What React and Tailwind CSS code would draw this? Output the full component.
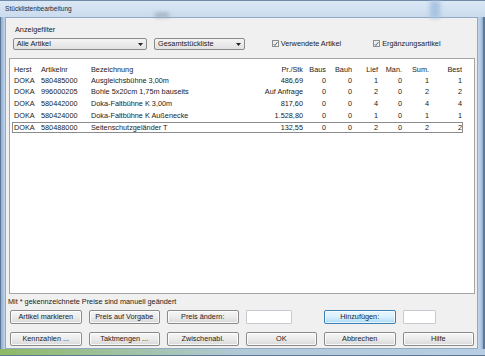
import React from "react";

const rows = [
  ["DOKA", "580485000", "Ausgleichsbühne 3,00m", "486,69", "0", "0", "1", "0", "1", "1"],
  ["DOKA", "996000205", "Bohle 5x20cm 1,75m bauseits", "Auf Anfrage", "0", "0", "2", "0", "2", "2"],
  ["DOKA", "580442000", "Doka-Faltbühne K 3,00m", "817,60", "0", "0", "4", "0", "4", "4"],
  ["DOKA", "580424000", "Doka-Faltbühne K Außenecke", "1.528,80", "0", "0", "1", "0", "1", "1"],
  ["DOKA", "580488000", "Seitenschutzgeländer T", "132,55", "0", "0", "2", "0", "2", "2"],
];

const header = ["Herst", "Artikelnr", "Bezeichnung", "Pr./Stk", "Baus", "Bauh", "Lief", "Man.", "Sum.", "Best"];

function Cells({ cells }) {
  return cells.map((c, i) => (
    <div
      key={i}
      className={
        "whitespace-nowrap overflow-visible " +
        (i < 3 ? "text-left pl-[1px]" : "text-right")
      }
    >
      {c}
    </div>
  ));
}

function Btn({ children, blue }) {
  return (
    <div
      className={
        "w-[71.5px] h-[14px] rounded-[2px] border flex items-center justify-center " +
        (blue
          ? "border-[#3c7fb1] bg-gradient-to-b from-[#eaf6fd] via-[#d9f0fc] to-[#a7d9f5] shadow-[inset_0_0_0_1px_rgba(255,255,255,0.7)]"
          : "border-[#8a8a8a] bg-gradient-to-b from-[#f6f6f6] via-[#ebebeb] to-[#d8d8d8] shadow-[inset_0_0_0_1px_rgba(255,255,255,0.8)]")
      }
    >
      {children}
    </div>
  );
}

function Combo({ w, children }) {
  return (
    <div
      className={
        w +
        " h-[12px] rounded-[2px] border border-[#8a8a8a] bg-gradient-to-b from-[#f4f4f4] to-[#e1e1e1] flex items-center justify-between pl-[3px] pr-[3px]"
      }
    >
      <span>{children}</span>
      <svg width="5" height="3" viewBox="0 0 5 3">
        <path d="M0 0h5L2.5 3z" fill="#222" />
      </svg>
    </div>
  );
}

function Check({ label }) {
  return (
    <div className="flex items-center gap-[2px]">
      <div className="w-[7px] h-[7px] border border-[#8e8f8f] bg-gradient-to-br from-[#e8e8e8] to-[#fbfbfb] flex items-center justify-center">
        <svg width="6" height="6" viewBox="0 0 6 6">
          <path d="M0.8 3.2 L2.3 4.8 L5.3 0.8" stroke="#4a5a74" strokeWidth="1.1" fill="none" />
        </svg>
      </div>
      <span>{label}</span>
    </div>
  );
}

export default function App() {
  return (
    <div
      className="w-[485px] h-[356px] overflow-hidden flex flex-col text-[7.3px] leading-none text-[#1b1b1b] bg-[#b7cde4]"
      style={{ fontFamily: '"Liberation Sans", Arial, sans-serif' }}
    >
      {/* Title bar */}
      <div className="h-[17px] shrink-0 flex items-center pl-[5px] bg-gradient-to-b from-[#dbe7f4] via-[#d3e2f2] to-[#c9dbee] border-t border-[#6f8aa8] relative">
        <span className="text-[6.6px] text-[#1e2a3a]">Stücklistenbearbeitung</span>
        <div className="absolute left-[430px] top-0 w-[10px] h-[17px] bg-[#a8c3e0] blur-[2px]" />
        <div className="absolute left-[155px] top-[12px] w-[14px] h-[4px] bg-[#9aa9b8] blur-[2px]" />
      </div>

      <div className="flex flex-1 min-h-0">
        {/* left frame */}
        <div className="w-[5px] shrink-0 bg-gradient-to-r from-[#8eaed2] to-[#c3d6ea] border-l border-[#5d7794]" />

        {/* client */}
        <div className="w-[473px] shrink-0 bg-[#f0f0f0] border border-[#93a9c1] flex flex-col">
          <div className="h-[16px] shrink-0 flex items-end pl-[9px] pb-[1px]">Anzeigefilter</div>

          <div className="h-[12px] mt-[4px] shrink-0 flex items-center pl-[6.7px]">
            <Combo w="w-[134px]">Alle Artikel</Combo>
            <div className="ml-[7.3px]">
              <Combo w="w-[91px]">Gesamtstückliste</Combo>
            </div>
            <div className="ml-[26.7px]">
              <Check label="Verwendete Artikel" />
            </div>
            <div className="ml-[32px]">
              <Check label="Ergänzungsartikel" />
            </div>
          </div>

          {/* list box */}
          <div className="ml-[3px] mt-[7.5px] w-[466px] h-[236px] shrink-0 bg-white border border-[#a5a5a5] pt-[7px]">
            <div className="ml-[2px] w-[451px] h-[9px] flex items-center border border-transparent">
              <div className="grid w-full grid-cols-[27px_50px_160px_53px_23px_26px_26px_24px_27px_33px] items-center">
                <Cells cells={header} />
              </div>
            </div>
            {rows.map((r, idx) => (
              <div
                key={idx}
                className={
                  "ml-[2px] w-[451px] h-[11.75px] flex items-center border " +
                  (idx === 4 ? "border-[#8c8c8c]" : "border-transparent")
                }
              >
                <div className="grid w-full grid-cols-[27px_50px_160px_53px_23px_26px_26px_24px_27px_33px] items-center">
                  <Cells cells={r} />
                </div>
              </div>
            ))}
          </div>

          <div className="h-[8px] mt-[4px] shrink-0 flex items-center pl-[2px]">
            Mit * gekennzeichnete Preise sind manuell geändert
          </div>

          <div className="mt-[4px] shrink-0 flex gap-[7px] pl-[4px] h-[14px]">
            <Btn>Artikel markieren</Btn>
            <Btn>Preis auf Vorgabe</Btn>
            <Btn>Preis ändern:</Btn>
            <div className="w-[71.5px] h-[14px]">
              <div className="w-[46px] h-[14px] bg-white border border-[#c6c9cf] rounded-[1px]" />
            </div>
            <Btn blue>Hinzufügen:</Btn>
            <div className="w-[71.5px] h-[14px]">
              <div className="w-[33px] h-[14px] bg-white border border-[#c6c9cf] rounded-[1px]" />
            </div>
          </div>

          <div className="mt-[8.5px] shrink-0 flex gap-[7px] pl-[4px] h-[14px]">
            <Btn>Kennzahlen ...</Btn>
            <Btn>Taktmengen ...</Btn>
            <Btn>Zwischenabl.</Btn>
            <Btn>OK</Btn>
            <Btn>Abbrechen</Btn>
            <Btn>Hilfe</Btn>
          </div>
        </div>

        {/* right frame */}
        <div className="w-[7px] shrink-0 bg-gradient-to-r from-[#c3d6ea] via-[#b3cbe4] to-[#8eaed2] border-r-2 border-[#5d7794]" />
      </div>

      {/* bottom frame */}
      <div className="h-[7px] shrink-0 bg-gradient-to-r from-[#8fb865] via-[#b2c9d8] to-[#b7cde4] border-b border-[#5d7794]" />
    </div>
  );
}
